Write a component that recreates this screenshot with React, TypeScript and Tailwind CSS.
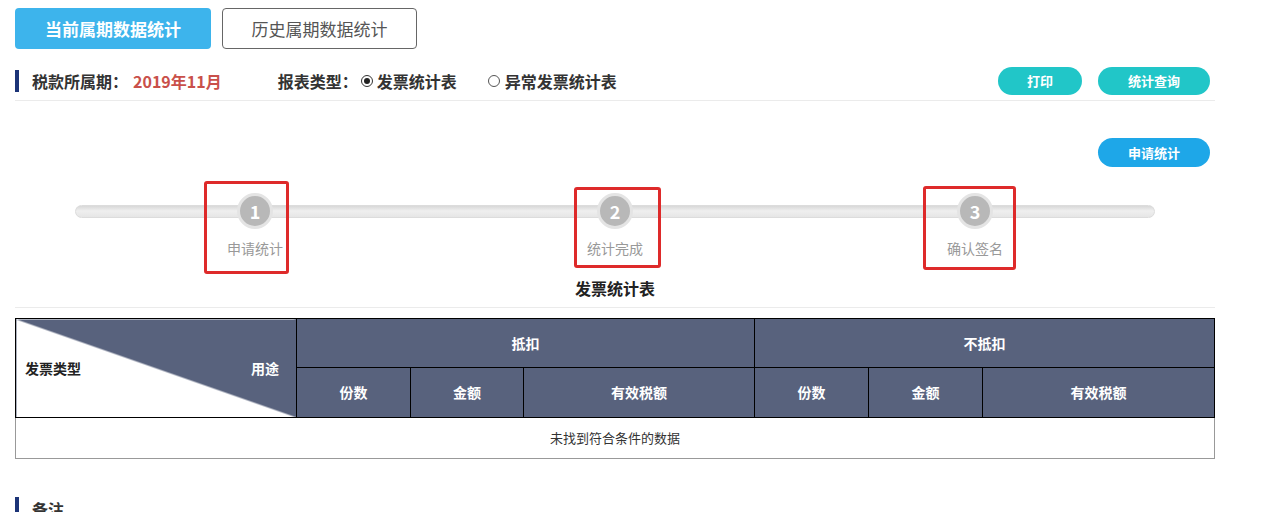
import React from "react";

const font = { fontFamily: '"Microsoft YaHei", "Noto Sans CJK SC", "Noto Sans", sans-serif' };

const steps = [
  { n: 1, label: "申请统计", box: "left-[-11px] right-[6px] top-[-12px] bottom-[-16px]" },
  { n: 2, label: "统计完成", box: "left-[-1px] right-[-6px] top-[-6px] bottom-[-10px]" },
  { n: 3, label: "确认签名", box: "left-[-12px] right-[-1px] top-[-7px] bottom-[-12px]" },
];

function Step({ n, label, box }: { n: number; label: string; box: string }) {
  return (
    <div className="relative flex w-[80px] flex-col items-center">
      <div className="flex h-[36px] w-[36px] items-center justify-center rounded-full border-[3px] border-[#e4e4e4] bg-[#b8b8b8] text-[18px] font-bold text-white">
        {n}
      </div>
      <div className="mt-[9px] text-[14px] leading-[20px] text-[#999]">{label}</div>
      {/* 红框标注 */}
      <div className={`pointer-events-none absolute rounded-[3px] border-[3px] border-[#de2a2a] ${box}`} />
    </div>
  );
}

const th = "border border-black bg-[#58627d] text-[14px] font-bold text-white";

export default function App() {
  return (
    <div className="w-[1272px] bg-white pl-[15px] text-[#333]" style={font}>
      {/* 顶部切换 */}
      <div className="flex gap-[11px] pt-[8px]">
        <button className="h-[41px] w-[196px] rounded-[4px] bg-[#3db4ec] text-[17px] font-bold text-white">
          当前属期数据统计
        </button>
        <button className="h-[41px] w-[195px] rounded-[4px] border border-[#666] bg-white text-[17px] text-[#555]">
          历史属期数据统计
        </button>
      </div>

      {/* 条件行 */}
      <div className="mt-[18px] flex h-[28px] w-[1200px] items-center">
        <div className="h-[22px] w-[4px] bg-[#1c3477]" />
        <span className="ml-[13px] text-[16px] font-bold text-[#333]">税款所属期：</span>
        <span className="ml-[5px] text-[16px] font-bold text-[#c9504a]">2019年11月</span>
        <span className="ml-[56px] text-[16px] font-bold text-[#333]">报表类型：</span>
        <label className="ml-[3px] flex items-center text-[16px] font-bold text-[#333]">
          <span className="mr-[4px] flex h-[12px] w-[12px] items-center justify-center rounded-full border border-[#333]">
            <span className="h-[6px] w-[6px] rounded-full bg-[#222]" />
          </span>
          发票统计表
        </label>
        <label className="ml-[31px] flex items-center text-[16px] font-bold text-[#333]">
          <span className="mr-[5px] h-[12px] w-[12px] rounded-full border border-[#555]" />
          异常发票统计表
        </label>
        <div className="ml-auto flex gap-[16px] pr-[5px]">
          <button className="h-[28px] w-[84px] rounded-full bg-[#21c6c8] text-[13px] font-bold text-white">打印</button>
          <button className="h-[28px] w-[112px] rounded-full bg-[#21c6c8] text-[13px] font-bold text-white">统计查询</button>
        </div>
      </div>
      <div className="mt-[5px] h-px w-[1200px] bg-[#ebebeb]" />

      <div className="flex w-[1200px] justify-end pr-[5px] pt-[37px]">
        <button className="h-[29px] w-[112px] rounded-full bg-[#1ea7e8] text-[13px] font-bold text-white">申请统计</button>
      </div>

      {/* 进度条 */}
      <div className="mt-[38px] w-[1200px]">
        <div className="ml-[60px] h-[13px] w-[1080px] rounded-full border border-[#dcdcdc] bg-[linear-gradient(#d8d8d8,#efefef_45%,#e6e6e6)]" />
        <div className="-mt-[25px] ml-[60px] flex w-[1080px] justify-center gap-[280px]">
          {steps.map((s) => (
            <Step key={s.n} {...s} />
          ))}
        </div>
      </div>

      <div className="mt-[18px] w-[1200px] text-center text-[16px] font-bold leading-[24px] text-[#222]">发票统计表</div>
      <div className="mt-[7px] h-px w-[1200px] bg-[#ebebeb]" />

      {/* 表格 */}
      <table className="mt-[10px] w-[1200px] border-collapse text-center">
        <thead>
          <tr className="h-[49px]">
            <th
              rowSpan={2}
              className="w-[281px] border border-black bg-[linear-gradient(to_top_right,#fff_calc(50%-0.5px),#58627d_calc(50%+0.5px))] p-0"
            >
              <div className="flex items-center justify-between pl-[9px] pr-[17px] text-[14px] font-bold">
                <span className="text-[#222]">发票类型</span>
                <span className="text-white">用途</span>
              </div>
            </th>
            <th colSpan={3} className={th}>抵扣</th>
            <th colSpan={3} className={th}>不抵扣</th>
          </tr>
          <tr className="h-[50px]">
            <th className={`${th} w-[114px]`}>份数</th>
            <th className={`${th} w-[113px]`}>金额</th>
            <th className={`${th} w-[231px]`}>有效税额</th>
            <th className={`${th} w-[114px]`}>份数</th>
            <th className={`${th} w-[114px]`}>金额</th>
            <th className={th}>有效税额</th>
          </tr>
        </thead>
        <tbody>
          <tr className="h-[41px]">
            <td colSpan={7} className="border border-[#999] text-[13px] text-[#333]">
              未找到符合条件的数据
            </td>
          </tr>
        </tbody>
      </table>

      {/* 备注 */}
      <div className="mt-[38px] flex h-[24px] items-start">
        <div className="h-[24px] w-[4px] bg-[#1c3477]" />
        <span className="ml-[13px] text-[16px] font-bold leading-[24px] text-[#333]">备注</span>
      </div>
    </div>
  );
}
